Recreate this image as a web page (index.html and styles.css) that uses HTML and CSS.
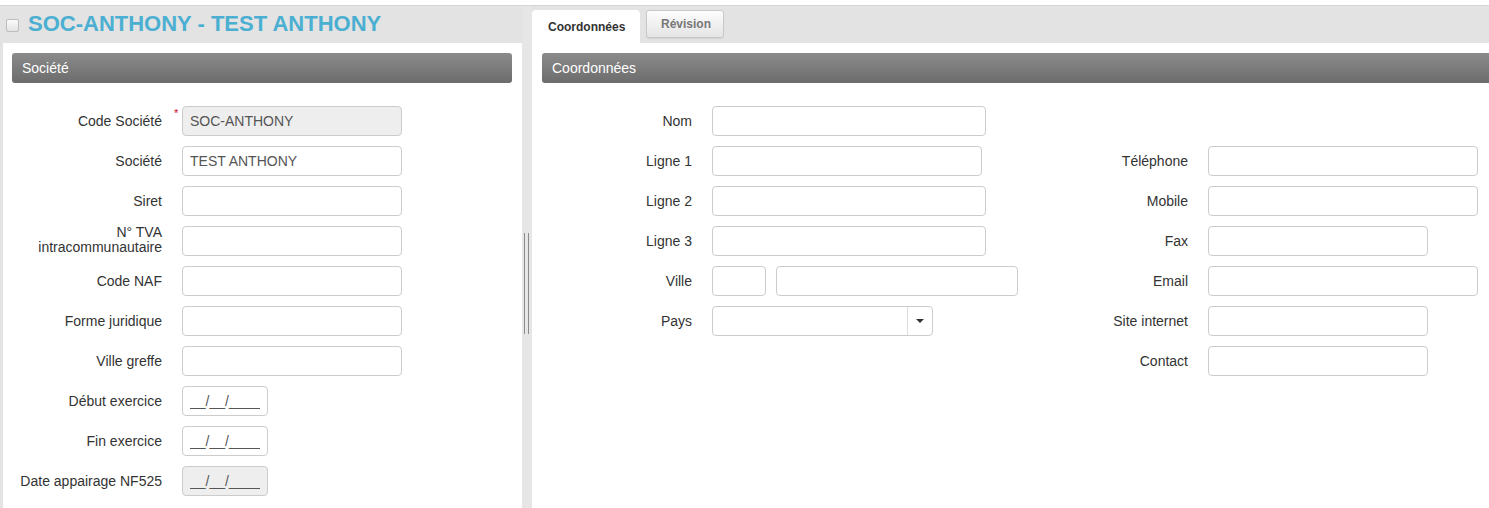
FILE: index.html
```html
<!DOCTYPE html>
<html lang="fr">
<head>
    <meta charset="UTF-8">
    <title>Société</title>
    <link rel="stylesheet" href="styles.css">
</head>
<body>
    <div class="top-strip"></div>
    <div class="main">
        <div class="left-col">
            <div class="title-bar">
                <input type="checkbox" class="title-check">
                <h1>SOC-ANTHONY - TEST ANTHONY</h1>
            </div>
            <div class="panel panel-left">
                <div class="section-head">Société</div>
                <div class="form">
                    <div class="row">
                        <label>Code Société</label>
                        <span class="required">*</span>
                        <input type="text" class="w220" value="SOC-ANTHONY" disabled>
                    </div>
                    <div class="row">
                        <label>Société</label>
                        <input type="text" class="w220" value="TEST ANTHONY">
                    </div>
                    <div class="row">
                        <label>Siret</label>
                        <input type="text" class="w220">
                    </div>
                    <div class="row">
                        <label class="two-lines">N° TVA<br>intracommunautaire</label>
                        <input type="text" class="w220">
                    </div>
                    <div class="row">
                        <label>Code NAF</label>
                        <input type="text" class="w220">
                    </div>
                    <div class="row">
                        <label>Forme juridique</label>
                        <input type="text" class="w220">
                    </div>
                    <div class="row">
                        <label>Ville greffe</label>
                        <input type="text" class="w220">
                    </div>
                    <div class="row">
                        <label>Début exercice</label>
                        <input type="text" class="date" value="__/__/____">
                    </div>
                    <div class="row">
                        <label>Fin exercice</label>
                        <input type="text" class="date" value="__/__/____">
                    </div>
                    <div class="row">
                        <label>Date appairage NF525</label>
                        <input type="text" class="date" value="__/__/____" disabled>
                    </div>
                </div>
            </div>
        </div>

        <div class="splitter">
            <div class="splitter-handle"></div>
        </div>

        <div class="right-col">
            <div class="tab-bar">
                <div class="tab active">Coordonnées</div>
                <div class="tab">Révision</div>
            </div>
            <div class="panel panel-right">
                <div class="section-head">Coordonnées</div>
                <div class="form-cols">
                    <div class="form">
                        <div class="row">
                            <label>Nom</label>
                            <input type="text" class="w274">
                        </div>
                        <div class="row">
                            <label>Ligne 1</label>
                            <input type="text" class="w270">
                        </div>
                        <div class="row">
                            <label>Ligne 2</label>
                            <input type="text" class="w274">
                        </div>
                        <div class="row">
                            <label>Ligne 3</label>
                            <input type="text" class="w274">
                        </div>
                        <div class="row">
                            <label>Ville</label>
                            <input type="text" class="cp">
                            <input type="text" class="city">
                        </div>
                        <div class="row">
                            <label>Pays</label>
                            <div class="select">
                                <span class="select-value"></span>
                                <span class="select-btn"><span class="caret"></span></span>
                            </div>
                        </div>
                    </div>
                    <div class="form form-second">
                        <div class="row">
                            <label>Téléphone</label>
                            <input type="text" class="w270">
                        </div>
                        <div class="row">
                            <label>Mobile</label>
                            <input type="text" class="w270">
                        </div>
                        <div class="row">
                            <label>Fax</label>
                            <input type="text" class="w220">
                        </div>
                        <div class="row">
                            <label>Email</label>
                            <input type="text" class="w270">
                        </div>
                        <div class="row">
                            <label>Site internet</label>
                            <input type="text" class="w220">
                        </div>
                        <div class="row">
                            <label>Contact</label>
                            <input type="text" class="w220">
                        </div>
                    </div>
                </div>
            </div>
        </div>
    </div>
</body>
</html>
```

FILE: styles.css
```css
html, body {
    height: 100%;
}

body {
    margin: 0;
    font-family: "Liberation Sans", Arial, sans-serif;
    font-size: 14px;
    color: #333;
    background: #e3e3e3;
    overflow: hidden;
}

.top-strip {
    height: 5px;
    background: #fff;
    border-bottom: 1px solid #d6d6d6;
}

.main {
    display: flex;
    height: calc(100% - 6px);
}

/* colonne gauche */
.left-col {
    width: 519px;
    padding-left: 3px;
    display: flex;
    flex-direction: column;
}

.title-bar {
    height: 37px;
    display: flex;
    align-items: center;
}

.title-check {
    -webkit-appearance: none;
    appearance: none;
    box-sizing: border-box;
    margin: 0 9px 0 3px;
    width: 13px;
    height: 13px;
    border: 1px solid #bdbdbd;
    border-radius: 2px;
    background: linear-gradient(to bottom, #fcfcfc 0%, #e2e2e2 100%);
    position: relative;
    top: 1px;
}

h1 {
    margin: 0;
    font-size: 22px;
    font-weight: bold;
    color: #4bafd2;
    position: relative;
    top: -1px;
}

.panel {
    flex: 1;
    background: #fff;
    padding-top: 10px;
}

.panel-left {
    padding-left: 9px;
    padding-right: 10px;
}

.panel-right {
    padding-left: 10px;
}

.section-head {
    height: 30px;
    line-height: 30px;
    padding-left: 10px;
    color: #fff;
    font-size: 14px;
    background: linear-gradient(to bottom, #8b8b8b 0%, #6c6c6c 100%);
    border-radius: 3px;
}

.panel-right .section-head {
    border-radius: 3px 0 0 3px;
}

/* formulaires */
.form {
    display: flex;
    flex-direction: column;
    gap: 10px;
    padding-top: 23px;
}

.row {
    display: flex;
    align-items: center;
    height: 30px;
    position: relative;
}

.row label {
    width: 150px;
    margin-right: 20px;
    text-align: right;
    color: #333;
    flex-shrink: 0;
}

.row label.two-lines {
    line-height: 15px;
    position: relative;
    top: -1px;
}

.required {
    position: absolute;
    left: 162px;
    top: 1px;
    color: #d0021b;
    font-size: 11px;
}

input[type="text"] {
    box-sizing: border-box;
    height: 30px;
    padding: 0 7px;
    border: 1px solid #ccc;
    border-radius: 4px;
    background: #fff;
    font-family: "Liberation Sans", Arial, sans-serif;
    font-size: 14px;
    color: #555;
    margin: 0;
}

input[disabled] {
    background: #eee;
    color: #555;
}

.w220 { width: 220px; }
.w270 { width: 270px; }
.w274 { width: 274px; }
.date { width: 86px; }
.cp { width: 54px; margin-right: 10px !important; }
.city { width: 242px; }

.form-cols {
    display: flex;
}

.form-cols > .form:first-child {
    width: 496px;
}

.form-second {
    padding-top: 63px;
}

/* liste déroulante */
.select {
    box-sizing: border-box;
    width: 221px;
    height: 30px;
    border: 1px solid #ccc;
    border-radius: 4px;
    display: flex;
    background: #fff;
}

.select-value {
    flex: 1;
}

.select-btn {
    width: 24px;
    border-left: 1px solid #ddd;
    display: flex;
    align-items: center;
    justify-content: center;
}

.caret {
    width: 0;
    height: 0;
    border-left: 4px solid transparent;
    border-right: 4px solid transparent;
    border-top: 4px solid #333;
}

/* séparateur */
.splitter {
    width: 10px;
    background: #e6e6e6;
    padding-top: 227px;
    box-sizing: border-box;
}

.splitter-handle {
    box-sizing: border-box;
    width: 5px;
    height: 101px;
    margin-left: 2px;
    border-left: 1px solid #8c8c8c;
    border-right: 1px solid #8c8c8c;
}

/* colonne droite */
.right-col {
    flex: 1;
    display: flex;
    flex-direction: column;
}

.tab-bar {
    height: 37px;
    box-sizing: border-box;
    padding-top: 4px;
    display: flex;
    align-items: flex-start;
    gap: 6px;
}

.tab {
    font-size: 12px;
    font-weight: bold;
    color: #777;
    box-sizing: border-box;
    height: 28px;
    line-height: 26px;
    padding: 0 14px;
    width: 78px;
    text-align: center;
    border: 1px solid #c9c9c9;
    border-radius: 3px;
    background: linear-gradient(to bottom, #fdfdfd 0%, #e4e4e4 100%);
    box-shadow: 0 1px 1px rgba(0, 0, 0, 0.08);
}

.tab.active {
    width: 108px;
    height: 33px;
    line-height: 34px;
    padding: 0 16px;
    text-align: left;
    color: #333;
    background: #fff;
    border: none;
    border-radius: 4px 4px 0 0;
    box-shadow: none;
}
```
